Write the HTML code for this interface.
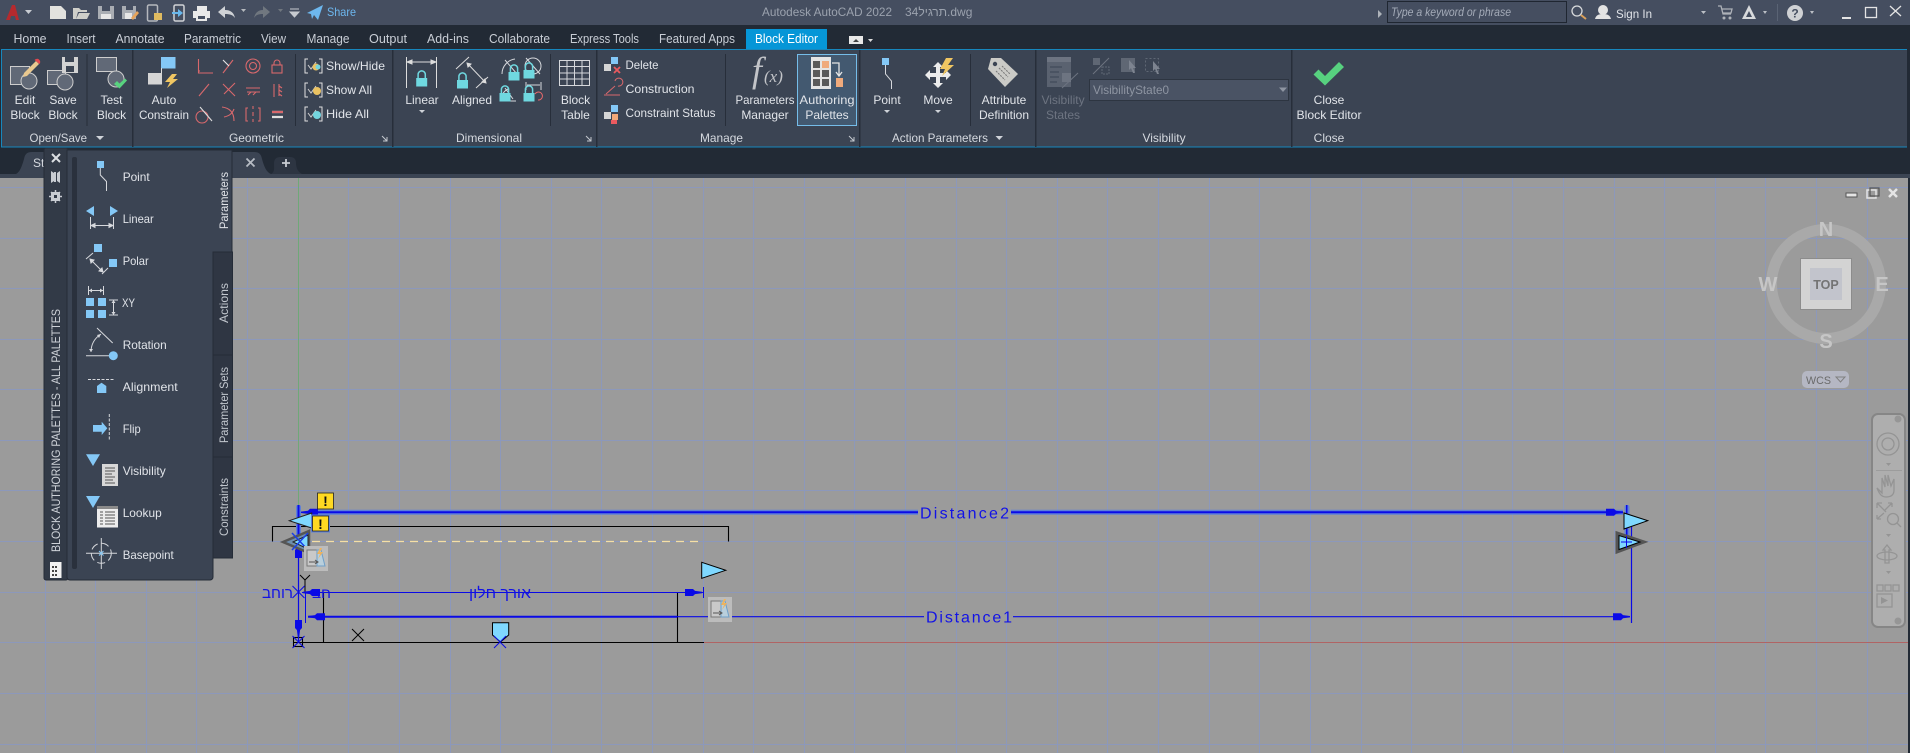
<!DOCTYPE html>
<html><head><meta charset="utf-8"><title>AutoCAD Block Editor</title>
<style>
html,body{margin:0;padding:0;width:1910px;height:753px;overflow:hidden;background:#222a35}
svg{display:block}
text{font-family:"Liberation Sans","Noto Sans CJK JP",sans-serif;font-size:12px;fill:#e1e4e9}
.m{text-anchor:middle}
.tab{fill:#c9ced6;font-size:12.5px}
.pt{fill:#d5d9df}
.dim{fill:#6d7481}
.w{fill:none;stroke:#d6d8dc;stroke-width:1}
.r{fill:none;stroke:#d8686c;stroke-width:1.1}
.cad{fill:#1212e6;font-size:16px}
.cube{fill:#c6c6c6;font-weight:bold;font-size:20px;text-anchor:middle}
.nav{fill:none;stroke:#949494;stroke-width:1.3}
</style></head><body>
<svg width="1910" height="753" viewBox="0 0 1910 753" xmlns="http://www.w3.org/2000/svg">
<defs>
<polygon id="ah" points="-17,-3.5 -9,-3.5 -7,-1.6 0,-.7 0,.7 -7,1.6 -9,3.5 -17,3.5" fill="#0a0ae6"/>
<g id="lock"><path d="M-3.6 0v-3.5a3.6 3.6 0 0 1 7.2 0V0" fill="none" stroke="#6fd8e0" stroke-width="1.5"/><rect x="-5.5" y="0" width="11" height="8.5" fill="#6fd8e0"/></g>
<g id="sh"><path d="M4 -7H1V7H4M15 -7H18V7H15" fill="none" stroke="#e0e0e0"/><path d="M4 -1l3 4 5-7" fill="none" stroke="#cfcfcf"/></g>
<g id="tip"><rect width="24" height="25" fill="#bcbcbc"/><rect x="3" y="4" width="11" height="16" fill="#c9c9c9" stroke="#777"/><path d="M13 4h4l4 16h-8z" fill="#b9cfdc" stroke="#6f9fc8"/><path d="M16 2l-3 6h3l-2 5 5-7h-3l2-4z" fill="#eeb35d"/><path d="M5 16h9m-3-2l3 2-3 2" stroke="#555" fill="none"/></g>
<g id="bx"><path d="M-6 -6L6 6M-6 6L6 -6" stroke="#0a0ae6" stroke-width="1"/></g>
</defs>

<!-- top bars -->
<rect width="1910" height="753" fill="#222a35"/>
<rect width="1910" height="25" fill="#454e60"/>

<!-- quick access -->
<path d="M6 20L12 5h3l4 15h-3l-1-4h-4l-1 4z" fill="#b52a2e"/><path d="M25 10h7l-3.5 4z" fill="#c8ccd2"/>
<path d="M50 6h11l5 5v8H50z" fill="#e2e2de"/>
<path d="M73 19V8h6l2 2h6v2H78l-2 7z M76 19l3-6h11l-3 6z" fill="#cfcfc9"/>
<g fill="#a9adb3"><path d="M98 6h16v13H98z"/></g><rect x="102" y="6" width="8" height="5" fill="#454e60"/><rect x="101" y="14" width="10" height="5" fill="#e6e6e6"/>
<path d="M122 6h14v13h-14z" fill="#a9adb3"/><rect x="126" y="6" width="7" height="4" fill="#454e60"/><rect x="125" y="13" width="7" height="6" fill="#e6e6e6"/><path d="M131 18l6-7 2 2-6 7z" fill="#e7a45a"/>
<rect x="147.5" y="5" width="10" height="16" rx="1.5" fill="none" stroke="#b5b8bd" stroke-width="1.5"/><path d="M154 13h8v7h-8z" fill="#dfba60"/>
<rect x="174" y="5" width="10" height="16" rx="1.5" fill="none" stroke="#d0d2d6" stroke-width="1.5"/><path d="M172 12h6v-3l5 4-5 4v-3h-6z" fill="#68b7ec"/>
<path d="M197 6h10v5h-10z" fill="#e8e8e8"/><path d="M193 11h17v7h-3v3h-11v-3h-3z" fill="#e8e8e8"/><rect x="198" y="16" width="7" height="3" fill="#454e60"/>
<path d="M218 12l7-6v4c6 0 9 3 10 8-2-3-5-4-10-4v4z" fill="#cfd2d6"/><path d="M241 9h5l-2.5 3z" fill="#b5b9be"/>
<path d="M270 12l-7-6v4c-5 0-8 3-9 8 2-3 4-4 9-4v4z" fill="#70777f"/><path d="M278 9h5l-2.5 3z" fill="#70777f"/>
<path d="M290 9h9M290 12h9l-4.5 5z" stroke="#c6cad0" fill="#c6cad0" stroke-width="1"/>
<path d="M307 13l16-8-5 15-4-5-2 4-1-5z" fill="#6db7ee"/>
<text x="327" y="16" textLength="29" lengthAdjust="spacingAndGlyphs" style="fill:#6db7ee">Share</text>
<text x="762" y="16" textLength="130" lengthAdjust="spacingAndGlyphs" style="fill:#9ba2ae">Autodesk AutoCAD 2022</text>
<text x="905" y="16" style="fill:#9ba2ae">תרגיל34.dwg</text>

<!-- right top -->
<path d="M1378 10l4 4-4 4z" fill="#aeb3ba"/>
<rect x="1387.5" y="1.5" width="179" height="21" fill="#454e60" stroke="#1f2631"/>
<text x="1391" y="16" textLength="120" lengthAdjust="spacingAndGlyphs" style="fill:#a4abb8;font-style:italic">Type a keyword or phrase</text>
<circle cx="1577" cy="11" r="5" fill="none" stroke="#d8dadc" stroke-width="1.3"/><path d="M1581 15l5 4" stroke="#d9a05b" stroke-width="2"/>
<circle cx="1603" cy="10" r="5" fill="#e3e3e3"/><path d="M1595 19c1-4 4-5 8-5s7 1 8 5z" fill="#e3e3e3"/>
<text x="1616" y="18" textLength="36" lengthAdjust="spacingAndGlyphs">Sign In</text>
<path d="M1701 11h5l-2.5 3z" fill="#bcc0c6"/>
<path d="M1718 6h3l2 8h8M1722 9h10l-1 4h-8" stroke="#aeb2b8" fill="none" stroke-width="1.3"/><circle cx="1724" cy="18" r="1.5" fill="#aeb2b8"/><circle cx="1730" cy="18" r="1.5" fill="#aeb2b8"/>
<path d="M1749 5l7 14h-14z M1749 11l-3 6h6z" fill="#d8dadc" fill-rule="evenodd"/>
<path d="M1763 11h4l-2 3z" fill="#bcc0c6"/>
<rect x="1777" y="4" width="1" height="17" fill="#5a6374"/>
<circle cx="1795" cy="13" r="8" fill="#cfd1d4"/><text x="1795" y="17.5" class="m" style="font-weight:bold;font-size:12px;fill:#454e60">?</text>
<path d="M1810 11h4l-2 3z" fill="#bcc0c6"/>
<rect x="1842" y="17" width="9" height="2" fill="#e4e4e4"/>
<rect x="1865.5" y="7.5" width="11" height="10" fill="none" stroke="#e4e4e4" stroke-width="1.3"/>
<path d="M1890 6l11 10M1901 6l-11 10" stroke="#e4e4e4" stroke-width="1.3"/>

<!-- tabs -->
<text class="tab" x="13.5" y="43" textLength="33" lengthAdjust="spacingAndGlyphs">Home</text>
<text class="tab" x="66.5" y="43" textLength="29" lengthAdjust="spacingAndGlyphs">Insert</text>
<text class="tab" x="115.5" y="43" textLength="49" lengthAdjust="spacingAndGlyphs">Annotate</text>
<text class="tab" x="184" y="43" textLength="57" lengthAdjust="spacingAndGlyphs">Parametric</text>
<text class="tab" x="261" y="43" textLength="25" lengthAdjust="spacingAndGlyphs">View</text>
<text class="tab" x="306.5" y="43" textLength="43" lengthAdjust="spacingAndGlyphs">Manage</text>
<text class="tab" x="369" y="43" textLength="38" lengthAdjust="spacingAndGlyphs">Output</text>
<text class="tab" x="427" y="43" textLength="42" lengthAdjust="spacingAndGlyphs">Add-ins</text>
<text class="tab" x="489" y="43" textLength="61" lengthAdjust="spacingAndGlyphs">Collaborate</text>
<text class="tab" x="570" y="43" textLength="69" lengthAdjust="spacingAndGlyphs">Express Tools</text>
<text class="tab" x="659" y="43" textLength="76" lengthAdjust="spacingAndGlyphs">Featured Apps</text>
<rect x="746" y="29" width="81" height="20" fill="#0696d7"/>
<text class="tab" x="755" y="43" textLength="63" lengthAdjust="spacingAndGlyphs" style="fill:#fff">Block Editor</text>
<rect x="849" y="36" width="14" height="8" fill="#e8e8e8"/><path d="M853 42h6l-3-3z" fill="#444"/><path d="M868 39h5l-2.5 3z" fill="#dcdcdc"/>

<!-- ribbon -->
<rect x="1" y="49.5" width="1906" height="97.5" fill="#3b4453"/>
<path d="M1 49.5H1907M1 147H1907" stroke="#1787bd" stroke-width="1"/>
<path d="M1.5 49.5V147" stroke="#1787bd"/>
<g fill="#272e3a"><rect x="132" y="50" width="1.5" height="97"/><rect x="392" y="50" width="1.5" height="97"/><rect x="596" y="50" width="1.5" height="97"/><rect x="859" y="50" width="1.5" height="97"/><rect x="1035" y="50" width="1.5" height="97"/><rect x="1291" y="50" width="1.5" height="97"/>
<rect x="86.5" y="54" width="1" height="72"/><rect x="295" y="54" width="1" height="72"/><rect x="550" y="54" width="1" height="72"/><rect x="725" y="54" width="1" height="72"/><rect x="970" y="54" width="1" height="72"/></g>

<!-- Open/Save icons -->
<rect x="10.5" y="66.5" width="19" height="18" fill="#616977" stroke="#cdcdcd"/><circle cx="29" cy="81" r="8" fill="#616977" stroke="#cdcdcd"/>
<path d="M24 73l12-12 3 3-12 12-4 1z" fill="#e9c88f"/><path d="M34.5 60a2.5 2.5 0 0 1 5 4z" fill="#e4484f"/>
<rect x="47.5" y="70.5" width="18" height="14" fill="#616977" stroke="#cdcdcd"/><circle cx="65" cy="82" r="8" fill="#616977" stroke="#cdcdcd"/>
<rect x="62" y="57" width="16" height="16" fill="#d2d2d2"/><rect x="65" y="57" width="9" height="5" fill="#3b4453"/><rect x="66" y="66" width="8" height="6" fill="#3b4453"/>
<rect x="96.5" y="57.5" width="20" height="14" fill="#616977" stroke="#cdcdcd"/><circle cx="116" cy="79" r="8" fill="#616977" stroke="#cdcdcd"/>
<path d="M114 84l3-3 2.5 2.5 5.5-5 2 2-7.5 8z" fill="#58d27f"/>
<text class="m" x="25" y="104">Edit</text><text class="m" x="25" y="119">Block</text>
<text class="m" x="63" y="104">Save</text><text class="m" x="63" y="119">Block</text>
<text class="m" x="111.5" y="104">Test</text><text class="m" x="111.5" y="119">Block</text>
<text class="pt" x="29.5" y="142" textLength="57.5" lengthAdjust="spacingAndGlyphs">Open/Save</text><path d="M96 136h8l-4 4z" fill="#cfd3d9"/>

<!-- Geometric -->
<rect x="161" y="57" width="14.5" height="11.5" fill="#84c8f6"/><path d="M161.5 68V75" stroke="#ddd"/><rect x="148" y="73" width="14" height="11.5" fill="#d5d5d5"/>
<path d="M172 74l-7 8h5l-3 6 11-9h-5l4-5z" fill="#f0c662"/>
<text class="m" x="164" y="104">Auto</text><text class="m" x="164" y="119" textLength="50" lengthAdjust="spacingAndGlyphs">Constrain</text>
<g class="r">
<path d="M198.5 59V73H213"/><path d="M198 71h2" />
<path d="M223 73l10-13"/><path d="M223 60l6 6" stroke="#e6e6e6"/>
<circle cx="253" cy="66" r="7"/><circle cx="253" cy="66" r="3.5"/>
<rect x="272" y="65" width="10" height="8" /><path d="M274 65v-2a3 3 0 0 1 6 0v2"/>
<path d="M199 96l10-12"/>
<path d="M223 84l12 12M224 94l11-11"/>
<path d="M246 88h14M247 92h13M248 95l3-3M253 95l3-3"/>
<path d="M274 84v13M279 84v12M279 86l3 2M279 90l3 2M279 94l3 2"/>
<circle cx="202" cy="117" r="6"/><path d="M200 107l12 14" stroke="#ddd"/>
<path d="M222 107c8 1 12 6 12 14M224 117c5-1 8-3 10-8" />
<path d="M248 108h-2v13h2M258 108h2v13h-2M253 106v3M253 112v4M253 119v3"/>
</g>
<path d="M272 112h11M272 117h11" stroke="#e0e0e0" stroke-width="2.2"/>
<path d="M272 112h11" stroke="#d8686c" stroke-width="2.2"/>
<use href="#sh" x="304" y="66"/><circle cx="316" cy="67" r="3.5" fill="#eac262"/><circle cx="318" cy="67" r="2.5" fill="#73d5df"/>
<use href="#sh" x="304" y="90"/><circle cx="317" cy="91" r="4" fill="#eac262"/>
<use href="#sh" x="304" y="114"/><circle cx="317" cy="115" r="4" fill="#73d5df"/>
<text x="326" y="70" textLength="59" lengthAdjust="spacingAndGlyphs">Show/Hide</text>
<text x="326" y="94" textLength="46" lengthAdjust="spacingAndGlyphs">Show All</text>
<text x="326" y="118" textLength="43" lengthAdjust="spacingAndGlyphs">Hide All</text>
<text class="pt" x="229" y="142" textLength="55" lengthAdjust="spacingAndGlyphs">Geometric</text>
<path d="M382 136l5 5M387 137v4h-4" stroke="#c4c8ce" fill="none"/>

<!-- Dimensional -->
<path d="M406.5 57v31M436.5 57v31M407 62h29M407 62l5-2v4zM436 62l-5-2v4z" stroke="#dcdcdc" fill="#dcdcdc"/>
<use href="#lock" x="421.7" y="78"/>
<text class="m" x="422" y="104">Linear</text><path d="M419 110h6l-3 3z" fill="#cfd3d9"/>
<path d="M456 69l13-12M476 88l12-11M467 63l19 20M467 63l1 4 3-3zM486 83l-1-4-3 3z" stroke="#dcdcdc" fill="#dcdcdc"/>
<use href="#lock" x="462.5" y="80"/>
<text class="m" x="472" y="104">Aligned</text>
<path d="M502 74c0-8 6-14 13-15M505 60l12 14" class="w"/><use href="#lock" x="514" y="69" transform="translate(0 3)"/>
<circle cx="533" cy="66" r="8" class="w"/><path d="M526 58l14 16" class="w"/><use href="#lock" x="529" y="70"/>
<path d="M501 100c0-5 3-9 7-11M505 88l8 11M501 101h15" class="w"/><use href="#lock" x="505" y="93"/>
<path d="M526 82v8M541 82v8M527 85h13" class="w"/><use href="#lock" x="529" y="93"/><path d="M538 100a4 4 0 1 0 -3-6" stroke="#e9696c" fill="none"/>
<path d="M559.5 60.5h30v25h-30zM559.5 66.5h30M559.5 73h30M559.5 79h30M567 60v26M574.5 60v26M582 60v26" class="w"/>
<text class="m" x="575.5" y="104">Block</text><text class="m" x="575.5" y="119">Table</text>
<text class="pt" x="456" y="142" textLength="66" lengthAdjust="spacingAndGlyphs">Dimensional</text>
<path d="M586 136l5 5M591 137v4h-4" stroke="#c4c8ce" fill="none"/>

<!-- Manage -->
<rect x="611" y="57" width="7" height="7" fill="#84c8f6"/><rect x="604" y="64" width="7" height="7" fill="#d5d5d5"/><path d="M614 67l6 6M620 67l-6 6" stroke="#ea5a5f" stroke-width="1.8"/>
<path d="M604 95h16M606 94l9-8M615 81a4 4 0 1 1 3 5" stroke="#d8686c" fill="none"/>
<rect x="611" y="105" width="7" height="7" fill="#84c8f6"/><rect x="604" y="112" width="7" height="7" fill="#d5d5d5"/><rect x="612" y="114" width="6" height="6" fill="#f0a878"/><rect x="611" y="120" width="6" height="4" fill="#ea5a5f"/>
<text x="625.5" y="69" textLength="33" lengthAdjust="spacingAndGlyphs">Delete</text>
<text x="625.5" y="93" textLength="69" lengthAdjust="spacingAndGlyphs">Construction</text>
<text x="625.5" y="117" textLength="90" lengthAdjust="spacingAndGlyphs">Constraint Status</text>
<text x="752" y="82" style="font-family:'Liberation Serif',serif;font-style:italic;font-size:36px;fill:#c2c4c8">f</text>
<text x="764" y="82" style="font-family:'Liberation Serif',serif;font-style:italic;font-size:17px;fill:#c2c4c8">(x)</text>
<text class="m" x="765" y="104" textLength="59" lengthAdjust="spacingAndGlyphs">Parameters</text><text class="m" x="765" y="119">Manager</text>
<rect x="797.5" y="54.5" width="59" height="71" fill="#435970" stroke="#75bde9"/>
<rect x="811" y="57" width="20" height="32" fill="#e4e4e4"/>
<g fill="#5a5a5a"><rect x="813" y="61" width="7" height="7"/><rect x="813" y="70" width="7" height="7"/><rect x="822" y="70" width="7" height="7"/><rect x="813" y="79" width="7" height="7"/><rect x="822" y="79" width="7" height="7"/></g>
<rect x="822" y="61" width="7" height="7" fill="#efaa7c"/><rect x="836" y="78" width="7" height="9" fill="#efaa7c"/>
<path d="M832 63h7v12M836 72l3 4 3-4" stroke="#e4e4e4" fill="none" stroke-width="1.3"/>
<text class="m" x="827" y="104" textLength="55" lengthAdjust="spacingAndGlyphs">Authoring</text><text class="m" x="827" y="119">Palettes</text>
<text class="pt" x="700" y="142" textLength="43" lengthAdjust="spacingAndGlyphs">Manage</text>
<path d="M849 136l5 5M854 137v4h-4" stroke="#c4c8ce" fill="none"/>

<!-- Action Parameters -->
<rect x="882" y="58" width="7" height="7" fill="#84c8f6"/><path d="M885.5 65v9l6 7v8" class="w"/>
<text class="m" x="887" y="104">Point</text><path d="M884 110h6l-3 3z" fill="#cfd3d9"/>
<path d="M938 62l5 5h-3v6h6v-3l5 5-5 5v-3h-6v6h3l-5 5-5-5h3v-6h-6v3l-5-5 5-5v3h6v-6h-3z" fill="#ececec"/>
<path d="M946 58l-6 11h5l-3 7 12-11h-6l5-7z" fill="#f0c662"/>
<text class="m" x="938" y="104">Move</text><path d="M935 110h6l-3 3z" fill="#cfd3d9"/>
<path d="M991 58h10l17 16-13 13-17-18z" fill="#cbcbc7"/><circle cx="995" cy="64" r="2.2" fill="#3b4453"/><path d="M999 68l9 9M1002 66l8 8M996 71l9 9" stroke="#777" stroke-dasharray="2 1"/>
<text class="m" x="1004" y="104">Attribute</text><text class="m" x="1004" y="119">Definition</text>
<text class="pt" x="892" y="142" textLength="96" lengthAdjust="spacingAndGlyphs">Action Parameters</text><path d="M995.5 136h7.5l-3.75 4z" fill="#cfd3d9"/>

<!-- Visibility -->
<rect x="1047" y="57" width="24" height="30" fill="#5a6270"/><rect x="1047" y="57" width="24" height="5" fill="#6d7481"/>
<path d="M1050 67h12M1050 72h9M1050 77h9M1050 82h7" stroke="#3b4453"/>
<rect x="1062" y="73" width="9" height="9" fill="#6d7481"/><path d="M1062 88l16-15" stroke="#6d7481"/>
<text class="m dim" x="1063" y="104">Visibility</text><text class="m dim" x="1063" y="119">States</text>
<rect x="1093" y="58" width="7" height="7" fill="#5f6774"/><path d="M1093 74l16-16" stroke="#6d7481"/><rect x="1102" y="67" width="7" height="7" fill="none" stroke="#5f6774" stroke-dasharray="2 1"/>
<rect x="1121" y="58" width="14" height="14" fill="#5f6774"/><path d="M1129 60l7 8-3 0 2 5-2 0-2-5-2 2z" fill="#7d8490"/>
<rect x="1145.5" y="58.5" width="13" height="13" fill="none" stroke="#5f6774" stroke-dasharray="2 2"/><path d="M1153 61l7 8-3 0 2 5-2 0-2-5-2 2z" fill="#7d8490"/>
<rect x="1089.5" y="79.5" width="199" height="21" fill="#4a5364" stroke="#2d3541"/>
<text x="1093" y="94" textLength="76" lengthAdjust="spacingAndGlyphs" style="fill:#8e95a2">VisibilityState0</text>
<path d="M1279 87.5h8l-4 4.5z" fill="#8e95a2"/>
<text class="pt m" x="1164" y="142">Visibility</text>

<!-- Close -->
<path d="M1313.5 74.5l5-5 6.5 6.5 14-14 5 5-19 18.5z" fill="#57d17f"/>
<text class="m" x="1329" y="104">Close</text><text class="m" x="1329" y="119" textLength="65" lengthAdjust="spacingAndGlyphs">Block Editor</text>
<text class="pt m" x="1329" y="142">Close</text>

<!-- doc tabs -->
<path d="M16 174c4-2 6-8 8-15 1-5 3-7 8-7h222c5 0 7 2 8 7 2 7 4 13 9 15z" fill="#3b4453"/>
<text x="33" y="167" class="pt">Sta</text>
<path d="M246.5 158.5l8 8M254.5 158.5l-8 8" stroke="#b7bcc4" stroke-width="1.8"/>
<path d="M271 174c4-2 3-6 3-10 0-5 2-7 7-7h9c4 0 6 2 6 6 0 5 2 9 6 11z" fill="#2d3542"/>
<path d="M282 163h8M286 159v8" stroke="#c8ccd2" stroke-width="1.8"/>
<rect y="174" width="1910" height="4" fill="#3b4453"/>

<!-- canvas -->
<rect y="178" width="1908" height="575" fill="#9b9b9b"/>
<g stroke="#8c98bb" stroke-width="1" shape-rendering="crispEdges">
<path d="M45.5 178V753M95.5 178V753M146.5 178V753M196.5 178V753M247.5 178V753M348.5 178V753M399.5 178V753M450.5 178V753M500.5 178V753M551.5 178V753M601.5 178V753M652.5 178V753M703.5 178V753M753.5 178V753M804.5 178V753M854.5 178V753M905.5 178V753M956.5 178V753M1006.5 178V753M1057.5 178V753M1107.5 178V753M1158.5 178V753M1209.5 178V753M1259.5 178V753M1310.5 178V753M1361.5 178V753M1411.5 178V753M1462.5 178V753M1512.5 178V753M1563.5 178V753M1614.5 178V753M1664.5 178V753M1715.5 178V753M1765.5 178V753M1816.5 178V753M1867.5 178V753"/>
<path d="M0 187.5H1908M0 238.5H1908M0 288.5H1908M0 339.5H1908M0 389.5H1908M0 440.5H1908M0 490.5H1908M0 541.5H1908M0 592.5H1908M0 693.5H1908M0 744.5H1908"/>
<path d="M298.5 642V753" />
</g>
<path d="M298.5 178V505" stroke="#6fa878" stroke-width="1"/>
<path d="M0 642.5H293" stroke="#8c98bb"/>
<path d="M704 642.5H1908" stroke="#b06464" stroke-width="1"/>

<!-- drawing black -->
<path d="M272.5 541.5V526.5H728.5V541.5" fill="none" stroke="#000" stroke-width="1.1"/>
<path d="M312 541.5H703" stroke="#f5dfa6" stroke-width="1.2" stroke-dasharray="8 6"/>
<path d="M293 642.5H704M323.5 592V642M677.5 592V642" stroke="#000" stroke-width="1.1" fill="none"/>
<path d="M352 629l12 12M364 629l-12 12M300 575l5 5 5-5M305 580v12" stroke="#000" fill="none"/>
<rect x="293.5" y="637.5" width="9" height="9" fill="none" stroke="#000" stroke-width="1.1"/>

<!-- Distance 2 -->
<path d="M318 512.3H918M1011 512.3H1623" stroke="#5e80d8" stroke-width="5"/>
<path d="M318 512.3H918M1011 512.3H1623" stroke="#0a0ae6" stroke-width="2"/>
<text class="cad" x="920" y="518.5" textLength="89" lengthAdjust="spacing">Distance2</text>
<use href="#ah" transform="translate(301,512.3) rotate(180)"/>
<use href="#ah" transform="translate(1623,512.3)"/>
<rect x="296" y="505" width="5" height="36" rx="2" fill="#5e80d8"/><rect x="297.5" y="505" width="2" height="36" fill="#0a0ae6"/>
<rect x="1624.5" y="505" width="5" height="36" rx="2" fill="#5e80d8"/><rect x="1626" y="505" width="1.5" height="36" fill="#0a0ae6"/>

<!-- Distance 1 -->
<path d="M308 616.7H677" stroke="#0a0ae6" stroke-width="2"/>
<path d="M677 616.7H924M1013 616.7H1614" stroke="#0a0ae6" stroke-width="1.2"/>
<text class="cad" x="926" y="622.5" textLength="86" lengthAdjust="spacing">Distance1</text>
<use href="#ah" transform="translate(308,616.7) rotate(180)"/>
<use href="#ah" transform="translate(1630,616.7)"/>
<path d="M1631.5 523V623" stroke="#0a0ae6" stroke-width="1.2"/>

<!-- Hebrew dimension -->
<path d="M302 592.5H703" stroke="#0a0ae6" stroke-width="1.1"/>
<text x="469" y="598" textLength="62" lengthAdjust="spacingAndGlyphs" style="fill:#1212e6;font-size:15px">אורך חלון</text>
<text x="262" y="598" textLength="31" lengthAdjust="spacingAndGlyphs" style="fill:#1212e6;font-size:15px">רוחב</text>
<text x="312" y="598" textLength="19" lengthAdjust="spacingAndGlyphs" style="fill:#1212e6;font-size:14px">חב</text>
<use href="#ah" transform="translate(702,592.5)"/>
<use href="#ah" transform="translate(303,592.5) rotate(180)" />
<path d="M703.5 587v11" stroke="#0a0ae6"/>
<path d="M298.5 541V642" stroke="#0a0ae6" stroke-width="1.2"/>
<path d="M305.5 592V623" stroke="#0a0ae6"/>
<use href="#ah" transform="translate(298.5,541) rotate(-90)"/>
<use href="#ah" transform="translate(298.5,637) rotate(90)"/>
<use href="#bx" x="298.5" y="592"/>
<use href="#bx" x="298.5" y="642"/>

<!-- grips -->
<polygon points="701.7,562.3 701.7,578.3 725.7,570.3" fill="#7fd8ff" stroke="#000" stroke-width="1"/>
<polygon points="1624,513 1624,529 1647.7,520.7" fill="#7fd8ff" stroke="#000" stroke-width="1"/>
<polygon points="1617,533 1617,552 1644,542" fill="#7fd8ff" stroke="#555" stroke-width="3"/><polygon points="1619,535.5 1619,549.5 1640,542" fill="#7fd8ff" stroke="#000"/>
<path d="M1621 542h11M1626.5 536v12" stroke="#0a0ae6"/>
<polygon points="289.3,520.7 311.7,513 311.7,528" fill="#7fd8ff" stroke="#222" stroke-width="1"/>
<polygon points="283,542 309,531 309,553" fill="#6f8fae" stroke="#555" stroke-width="2.5"/>
<polygon points="293,542 308,535 308,549" fill="#7fd8ff" stroke="#222"/>
<path d="M292 533l16 17M308 533l-16 17" stroke="#1a3fe6" stroke-width="1.5"/>
<polygon points="492.5,622.7 508.7,622.7 508.7,635 500.5,642 492.5,635" fill="#7fd8ff" stroke="#000" stroke-width="1"/>
<use href="#bx" x="500" y="642"/>

<!-- warning -->
<rect x="311" y="514.5" width="19" height="18" fill="#5e80d8"/>
<rect x="312.5" y="516" width="16" height="15" fill="#ffd922" stroke="#222" stroke-width=".8"/>
<rect x="317.5" y="493" width="16" height="16" fill="#ffd922" stroke="#222" stroke-width=".8"/>
<text x="320.5" y="529" class="m" style="font-weight:bold;fill:#111;font-size:14px">!</text>
<text x="325.5" y="506" class="m" style="font-weight:bold;fill:#111;font-size:14px">!</text>
<use href="#tip" x="304" y="546"/><use href="#tip" x="708" y="597"/>

<!-- palette -->
<rect x="44" y="148" width="24" height="432" rx="2" fill="#323a47" stroke="#252c37"/>
<path d="M67 150h165v102h-19v325a3 3 0 0 1 -3 3H70a3 3 0 0 1 -3 -3z" fill="#3b4453" stroke="#252c37"/>
<rect x="213" y="252" width="19.5" height="103" fill="#2f3643" stroke="#252c37"/>
<rect x="213" y="355" width="19.5" height="102" fill="#2f3643" stroke="#252c37"/>
<rect x="213" y="457" width="19.5" height="101" fill="#2f3643" stroke="#252c37"/>
<rect x="72" y="157" width="5" height="412" rx="2" fill="#2a313d"/>
<path d="M52 154l8 8M60 154l-8 8" stroke="#dcdfe3" stroke-width="2"/>
<path d="M51 171l3 2v8l-3 2zM60 171l-3 2v8l3 2z" fill="#c8ccd2"/><rect x="54" y="172" width="2" height="10" fill="#c8ccd2"/>
<g fill="#c8ccd2"><rect x="51" y="192" width="9" height="9"/><path d="M55.5 190v13M49 196.5h13M51 192l9 9M60 192l-9 9" stroke="#c8ccd2" stroke-width="1.5"/></g><rect x="54" y="195" width="3" height="3" fill="#323a47"/>
<text transform="translate(60,552) rotate(-90)" textLength="243" lengthAdjust="spacingAndGlyphs" style="fill:#ced2d8">BLOCK AUTHORING PALETTES - ALL PALETTES</text>
<rect x="50" y="562" width="11.5" height="16" fill="#f2f2f2"/>
<g fill="#444"><rect x="52" y="566" width="2" height="2"/><rect x="55" y="566" width="2" height="2"/><rect x="52" y="570" width="2" height="2"/><rect x="55" y="570" width="2" height="2"/><rect x="52" y="574" width="2" height="2"/><rect x="55" y="574" width="2" height="2"/></g>
<text transform="translate(228,229) rotate(-90)" textLength="57" lengthAdjust="spacingAndGlyphs">Parameters</text>
<text transform="translate(228,323) rotate(-90)" textLength="40" lengthAdjust="spacingAndGlyphs" style="fill:#c3c8cf">Actions</text>
<text transform="translate(228,443) rotate(-90)" textLength="76" lengthAdjust="spacingAndGlyphs" style="fill:#c3c8cf">Parameter Sets</text>
<text transform="translate(228,536) rotate(-90)" textLength="58" lengthAdjust="spacingAndGlyphs" style="fill:#c3c8cf">Constraints</text>

<text x="122.7" y="181" textLength="27" lengthAdjust="spacingAndGlyphs">Point</text>
<text x="122.7" y="223" textLength="31" lengthAdjust="spacingAndGlyphs">Linear</text>
<text x="122.7" y="265" textLength="26" lengthAdjust="spacingAndGlyphs">Polar</text>
<text x="122" y="307" textLength="13" lengthAdjust="spacingAndGlyphs">XY</text>
<text x="122.7" y="349" textLength="44" lengthAdjust="spacingAndGlyphs">Rotation</text>
<text x="122.7" y="391" textLength="55" lengthAdjust="spacingAndGlyphs">Alignment</text>
<text x="122.7" y="433" textLength="18" lengthAdjust="spacingAndGlyphs">Flip</text>
<text x="122.7" y="475" textLength="43" lengthAdjust="spacingAndGlyphs">Visibility</text>
<text x="122.7" y="517" textLength="39" lengthAdjust="spacingAndGlyphs">Lookup</text>
<text x="122.7" y="559" textLength="51" lengthAdjust="spacingAndGlyphs">Basepoint</text>

<!-- palette icons -->
<rect x="97" y="161" width="7" height="7" fill="#84c8f6"/><path d="M100.3 168v7l6.2 6.500V191" class="w"/>
<path d="M94 206v10l-8-5zM110 206v10l8-5z" fill="#84c8f6"/>
<path d="M90.5 217v12M113.5 217v12M91 225.5h22M91 225.5l4-2v4zM113 225.5l-4-2v4z" stroke="#d6d8dc" fill="#d6d8dc"/>
<rect x="94" y="244" width="8" height="8" fill="#84c8f6"/><rect x="109" y="259" width="8" height="8" fill="#84c8f6"/>
<path d="M86 259l7-6M102 274l6-6M90 259l13 13M90 259l1 4 3-3zM103 272l-1-4-3 3z" stroke="#d6d8dc" fill="#d6d8dc"/>
<g fill="#84c8f6"><rect x="86" y="298" width="8" height="8"/><rect x="98" y="298" width="8" height="8"/><rect x="86" y="310" width="8" height="8"/><rect x="98" y="310" width="8" height="8"/></g>
<path d="M88.5 286v9M103.5 286v9M89 290.5h14M109 300h9M109 315h9M113.5 300v15" class="w"/>
<path d="M89 290.5l3-2v4zM103 290.5l-3-2v4zM113.5 300l-2 3h4zM113.5 315l-2-3h4z" fill="#d6d8dc"/>
<path d="M97 328l15.7 15M86 355.7h23M91 352c0-8 4-14 10-18" class="w"/><path d="M101 334l-4 1 2 3zM91 352l-2-3h4z" fill="#d6d8dc"/>
<circle cx="113.3" cy="355.7" r="4.5" fill="#84c8f6"/>
<path d="M88 379.5h27" stroke="#d6d8dc" stroke-dasharray="3 1.5"/>
<polygon points="101.5,382.7 106.3,386 106.3,393 97,393 97,386" fill="#84c8f6"/>
<polygon points="93,425 101.7,425 101.7,421.7 107.3,428.3 101.7,435 101.7,431.7 93,431.7" fill="#84c8f6"/>
<path d="M109.3 414v27" stroke="#d6d8dc" stroke-dasharray="3 1.5"/>
<polygon points="86,454.3 100,454.3 93,466" fill="#84c8f6"/>
<rect x="102" y="464" width="16" height="22" fill="#d8d8d8"/>
<path d="M105 468h10M105 471h10M105 474h7M105 477h10M105 480h8M105 483h10" stroke="#555"/>
<rect x="97" y="506" width="21" height="21.5" fill="#ededed"/><rect x="97" y="506" width="21" height="3" fill="#8a8a8a"/>
<path d="M100 512h3M105 512h10M100 515h3M105 515h10M100 518h3M105 518h10M100 521h3M105 521h10M100 524h3M105 524h10" stroke="#555"/>
<polygon points="86,496 100,496 93,508" fill="#84c8f6"/>
<path d="M86 553.3h31M101.3 538v31" class="w"/>
<circle cx="101.3" cy="553.3" r="10" fill="none" stroke="#d6d8dc" stroke-dasharray="8 3.7"/>
<path d="M99 551l4.5 4.5M103.5 551L99 555.5" stroke="#84c8f6"/>

<!-- viewport controls -->
<rect x="1846" y="193" width="11" height="4" fill="#e4e4e4" stroke="#555"/>
<rect x="1867" y="190" width="9" height="8" fill="none" stroke="#e4e4e4" stroke-width="1.5"/><rect x="1870" y="188" width="9" height="8" fill="none" stroke="#555" stroke-width="1.2"/>
<path d="M1889 189l8 8M1897 189l-8 8" stroke="#e4e4e4" stroke-width="2.5"/>

<!-- viewcube -->
<circle cx="1826" cy="284" r="54.5" fill="none" stroke="#a9a9a9" stroke-width="11"/>
<rect x="1800.5" y="258.5" width="51" height="51" fill="#d3d3d3" stroke="#8c8c8c"/>
<rect x="1810" y="268" width="32" height="32" fill="#c2c4cc"/>
<text x="1826" y="289" class="m" style="font-weight:bold;fill:#747474;font-size:12.5px">TOP</text>
<text class="cube" x="1826" y="236">N</text><text class="cube" x="1826" y="348">S</text><text class="cube" x="1768" y="291">W</text><text class="cube" x="1882" y="291">E</text>
<rect x="1802" y="371" width="47" height="17" rx="5" fill="#b5b7c3"/>
<text x="1806" y="384" textLength="25" lengthAdjust="spacingAndGlyphs" style="font-size:11px;fill:#6a6a6a">WCS</text>
<path d="M1836 377h9l-4.5 5z" fill="none" stroke="#808080"/>

<!-- nav bar -->
<rect x="1908" y="178" width="2" height="575" fill="#222a35"/>
<rect x="1872" y="414" width="33" height="213" rx="6" fill="#aeaeae" stroke="#868686" stroke-width="2"/>
<circle cx="1898" cy="419" r="3.500" fill="#969696"/>
<circle cx="1888" cy="444" r="11" class="nav"/><circle cx="1888" cy="444" r="6" class="nav"/>
<path d="M1886 463h5l-2.500 3z" fill="#949494"/><path d="M1876 470.5h26" stroke="#9c9c9c"/>
<path d="M1877 488l5 5v-15l3 9v-12l3 11v-11l3 11 3-7v11c0 5-3 7-8 7s-7-4-9-9z" class="nav"/>
<path d="M1877 503l9 9M1877 503v5M1877 503h5M1892 503l-7 7M1892 503v4M1892 503h-4M1877 519l7-6M1877 519v-4M1877 519h4" class="nav"/>
<circle cx="1893" cy="519" r="5.500" class="nav"/><path d="M1897 523l4 4" class="nav"/>
<path d="M1886 534h5l-2.500 3z" fill="#949494"/>
<path d="M1887 545l4 5h-2v13h-4v-13h-2z" class="nav"/><ellipse cx="1887" cy="556" rx="10" ry="4" class="nav"/>
<path d="M1886 571h5l-2.500 3z" fill="#949494"/>
<rect x="1877" y="585" width="6" height="6" class="nav"/><rect x="1885" y="585" width="6" height="6" class="nav"/><rect x="1893" y="585" width="6" height="6" class="nav"/>
<rect x="1877" y="594" width="15" height="13" class="nav"/><path d="M1881 597l7 3.500-7 3.500z" fill="#949494"/>
<circle cx="1898" cy="621" r="3.500" fill="#969696"/>
</svg>
</body></html>
